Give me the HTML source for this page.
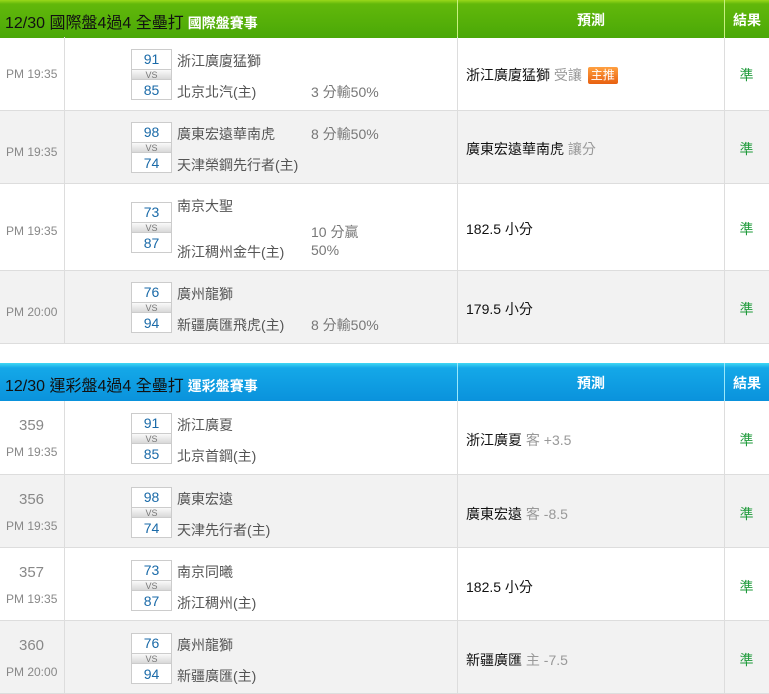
<!DOCTYPE html>
<html><head><meta charset="utf-8"><style>
*{margin:0;padding:0;box-sizing:border-box}
body{width:769px;height:694px;background:#fff;font-family:"Liberation Sans","Noto Sans CJK TC",sans-serif;font-size:14px;position:relative;overflow:hidden}
.hd{position:absolute;left:0;width:769px;height:38px}
.g{background:linear-gradient(#9ad81a 0,#62b80a 4px,#4aa808 100%)}
.b{background:linear-gradient(#40d8f4 0,#14a8e8 5px,#0a92dc 100%)}
.hd .t{position:absolute;left:5px;top:9px;font-size:16px;color:#111;white-space:nowrap}
.hd .t b{color:#fff;font-size:14px;margin-left:4px}
.hd .p{position:absolute;left:457px;width:267px;text-align:center;color:#fff;font-weight:bold;font-size:14px;border-left:1px solid #c8f080}
.hd .r{position:absolute;left:724px;width:45px;text-align:center;color:#fff;font-weight:bold;font-size:14px;border-left:1px solid #c8f080}
.b .p,.b .r{border-color:#9ae8fa}
.row{position:absolute;left:0;width:769px;border-top:1px solid #ddd;border-bottom:1px solid #ddd}
.row.gr{background:#f2f2f2}
.c1{position:absolute;left:64px;top:0;bottom:0;border-left:1px solid #ddd}
.c2{position:absolute;left:457px;top:0;bottom:0;border-left:1px solid #ddd}
.c3{position:absolute;left:724px;top:0;bottom:0;border-left:1px solid #ddd}
.tm{position:absolute;left:6px;font-size:12px;color:#888;white-space:nowrap}
.no{position:absolute;left:19px;font-size:15px;color:#888}
.box{position:absolute;left:131px;width:41px;border:1px solid #ccc;background:#fff}
.box div{text-align:center;color:#1a6aa8;font-size:14px}
.box .s1{height:19px;line-height:19px}
.box .vs{height:11px;line-height:10px;font-size:9px;color:#777;background:linear-gradient(#fafafa,#d8d8d8);border-top:1px solid #ccc;border-bottom:1px solid #ccc}
.box .s2{height:19px;line-height:20px}
.tn{position:absolute;left:177px;color:#555;font-size:14px;white-space:nowrap}
.hc{position:absolute;left:311px;color:#777;font-size:14px;white-space:nowrap}
.pr{position:absolute;left:466px;color:#111;font-size:14px;white-space:nowrap}
.pr i{font-style:normal;color:#999}
.badge{display:inline-block;background:linear-gradient(#ffa040,#e86010);color:#fff;font-size:12px;padding:0 3px;height:17px;line-height:17px;border-radius:2px;margin-left:2px;vertical-align:1px}
.ok{position:absolute;left:724px;width:45px;text-align:center;color:#1e9a3a;font-size:14px}
</style></head><body>

<div class="hd g" style="top:0"><div class="t">12/30 國際盤4過4 全壘打<b>國際盤賽事</b></div><div class="p" style="height:38px;top:0;padding-top:10px">預測</div><div class="r" style="height:38px;top:0;padding-top:10px">結果</div></div>

<div class="row" style="top:37px;height:74px;border-top:0"><div class="c1"></div><div class="c2"></div><div class="c3"></div>
<div class="tm" style="top:30px">PM 19:35</div>
<div class="box" style="top:12px"><div class="s1">91</div><div class="vs">VS</div><div class="s2">85</div></div>
<div class="tn" style="top:14px">浙江廣廈猛獅</div><div class="tn" style="top:45px">北京北汽(主)</div><div class="hc" style="top:45px">3 分輸50%</div>
<div class="pr" style="top:28px">浙江廣廈猛獅 <i>受讓</i> <span class="badge">主推</span></div>
<div class="ok" style="top:28px">準</div></div>

<div class="row gr" style="top:110px;height:74px"><div class="c1"></div><div class="c2"></div><div class="c3"></div>
<div class="tm" style="top:34px">PM 19:35</div>
<div class="box" style="top:11px"><div class="s1">98</div><div class="vs">VS</div><div class="s2">74</div></div>
<div class="tn" style="top:13px">廣東宏遠華南虎</div><div class="tn" style="top:44px">天津榮鋼先行者(主)</div><div class="hc" style="top:13px">8 分輸50%</div>
<div class="pr" style="top:28px">廣東宏遠華南虎 <i>讓分</i></div>
<div class="ok" style="top:28px">準</div></div>

<div class="row" style="top:183px;height:88px"><div class="c1"></div><div class="c2"></div><div class="c3"></div>
<div class="tm" style="top:40px">PM 19:35</div>
<div class="box" style="top:18px"><div class="s1">73</div><div class="vs">VS</div><div class="s2">87</div></div>
<div class="tn" style="top:12px">南京大聖</div><div class="tn" style="top:58px">浙江稠州金牛(主)</div><div class="hc" style="top:38px">10 分贏</div><div class="hc" style="top:58px">50%</div>
<div class="pr" style="top:35px">182.5 小分</div>
<div class="ok" style="top:35px">準</div></div>

<div class="row gr" style="top:270px;height:74px"><div class="c1"></div><div class="c2"></div><div class="c3"></div>
<div class="tm" style="top:34px">PM 20:00</div>
<div class="box" style="top:11px"><div class="s1">76</div><div class="vs">VS</div><div class="s2">94</div></div>
<div class="tn" style="top:13px">廣州龍獅</div><div class="tn" style="top:44px">新疆廣匯飛虎(主)</div><div class="hc" style="top:44px">8 分輸50%</div>
<div class="pr" style="top:28px">179.5 小分</div>
<div class="ok" style="top:28px">準</div></div>

<div class="hd b" style="top:363px"><div class="t">12/30 運彩盤4過4 全壘打<b>運彩盤賽事</b></div><div class="p" style="height:38px;top:0;padding-top:10px">預測</div><div class="r" style="height:38px;top:0;padding-top:10px">結果</div></div>

<div class="row" style="top:401px;height:74px;border-top:0"><div class="c1"></div><div class="c2"></div><div class="c3"></div>
<div class="no" style="top:16px">359</div><div class="tm" style="top:44px">PM 19:35</div>
<div class="box" style="top:12px"><div class="s1">91</div><div class="vs">VS</div><div class="s2">85</div></div>
<div class="tn" style="top:14px">浙江廣夏</div><div class="tn" style="top:45px">北京首鋼(主)</div>
<div class="pr" style="top:29px">浙江廣夏 <i>客 +3.5</i></div>
<div class="ok" style="top:29px">準</div></div>

<div class="row gr" style="top:474px;height:74px"><div class="c1"></div><div class="c2"></div><div class="c3"></div>
<div class="no" style="top:16px">356</div><div class="tm" style="top:44px">PM 19:35</div>
<div class="box" style="top:12px"><div class="s1">98</div><div class="vs">VS</div><div class="s2">74</div></div>
<div class="tn" style="top:14px">廣東宏遠</div><div class="tn" style="top:45px">天津先行者(主)</div>
<div class="pr" style="top:29px">廣東宏遠 <i>客 -8.5</i></div>
<div class="ok" style="top:29px">準</div></div>

<div class="row" style="top:547px;height:74px"><div class="c1"></div><div class="c2"></div><div class="c3"></div>
<div class="no" style="top:16px">357</div><div class="tm" style="top:44px">PM 19:35</div>
<div class="box" style="top:12px"><div class="s1">73</div><div class="vs">VS</div><div class="s2">87</div></div>
<div class="tn" style="top:14px">南京同曦</div><div class="tn" style="top:45px">浙江稠州(主)</div>
<div class="pr" style="top:29px">182.5 小分</div>
<div class="ok" style="top:29px">準</div></div>

<div class="row gr" style="top:620px;height:74px"><div class="c1"></div><div class="c2"></div><div class="c3"></div>
<div class="no" style="top:16px">360</div><div class="tm" style="top:44px">PM 20:00</div>
<div class="box" style="top:12px"><div class="s1">76</div><div class="vs">VS</div><div class="s2">94</div></div>
<div class="tn" style="top:14px">廣州龍獅</div><div class="tn" style="top:45px">新疆廣匯(主)</div>
<div class="pr" style="top:29px">新疆廣匯 <i>主 -7.5</i></div>
<div class="ok" style="top:29px">準</div></div>

</body></html>
